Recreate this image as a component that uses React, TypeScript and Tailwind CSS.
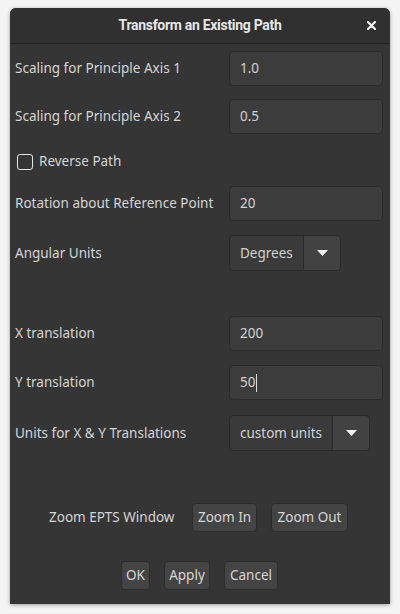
import React from "react";

const font = { fontFamily: '"Noto Sans", "Open Sans", sans-serif' };

function Entry({ value, caret }: { value: string; caret?: boolean }) {
  return (
    <div className="w-[154px] h-[35px] shrink-0 rounded-[4px] border border-[#2a2a2a] bg-[#3c3c3c] flex items-center pl-[10px] text-[13.5px] text-[#d2d2d2]">
      <span>{value}</span>
      {caret && <span className="inline-block w-px h-[18px] bg-[#e0e0e0] ml-px" />}
    </div>
  );
}

function Combo({ value, w, textW }: { value: string; w: number; textW: number }) {
  return (
    <div
      className="h-[36px] shrink-0 rounded-[4px] border border-[#2a2a2a] bg-[#3a3a3a] flex text-[13.5px] text-[#d2d2d2]"
      style={{ width: w }}
    >
      <div className="flex items-center pl-[10px] border-r border-[#2a2a2a]" style={{ width: textW }}>
        {value}
      </div>
      <div className="flex-1 flex items-center justify-center bg-[#424242] rounded-r-[4px]">
        <svg width="11" height="6" viewBox="0 0 11 6">
          <path d="M0 0 L11 0 L5.5 6 Z" fill="#f0f0f0" />
        </svg>
      </div>
    </div>
  );
}

function Row({ label, children, className = "" }: { label: string; children: React.ReactNode; className?: string }) {
  return (
    <div className={"flex items-center " + className}>
      <div className="w-[219px] shrink-0 pl-[5px] text-[13.5px] text-[#d4d4d4] whitespace-nowrap">{label}</div>
      {children}
    </div>
  );
}

function Btn({ children, w }: { children: React.ReactNode; w: number }) {
  return (
    <div
      className="h-[29px] shrink-0 rounded-[4px] border border-[#2c2c2c] bg-[#444444] flex items-center justify-center text-[13.5px] text-[#d6d6d6]"
      style={{ width: w }}
    >
      {children}
    </div>
  );
}

export default function App() {
  return (
    <div className="w-[400px] h-[614px] bg-[#f4f4f4] pt-[8px] pl-[10px]" style={font}>
      <div className="w-[380px] h-[596px] bg-[#353535] rounded-t-[6px] shadow-[0_1px_4px_rgba(0,0,0,0.35)] flex flex-col">
        <div className="h-[36px] bg-[#303030] rounded-t-[6px] border-b border-[#232323] flex items-center justify-center relative">
          <span
            className="text-[14px] font-bold text-[#e6e6e6] tracking-[-0.3px]"
            style={{ fontFamily: 'Roboto, "Noto Sans", sans-serif' }}
          >
            Transform an Existing Path
          </span>
          <svg className="absolute right-[14px] top-[13px]" width="9" height="9" viewBox="0 0 9 9">
            <path d="M1 1 L8 8 M8 1 L1 8" stroke="#f2f2f2" strokeWidth="2.2" strokeLinecap="round" />
          </svg>
        </div>
        <div className="flex flex-col pt-[7px]">
          <Row label="Scaling for Principle Axis 1">
            <Entry value="1.0" />
          </Row>
          <Row label="Scaling for Principle Axis 2" className="mt-[13px]">
            <Entry value="0.5" />
          </Row>
          <div className="mt-[19px] h-[17px] flex items-center pl-[7px]">
            <div className="w-[16px] h-[16px] rounded-[3px] border-[1.5px] border-[#e6e6e6]" />
            <span className="ml-[6px] text-[13.5px] text-[#d4d4d4]">Reverse Path</span>
          </div>
          <Row label="Rotation about Reference Point" className="mt-[16px]">
            <Entry value="20" />
          </Row>
          <Row label="Angular Units" className="mt-[14px]">
            <Combo value="Degrees" w={112} textW={74} />
          </Row>
          <Row label="X translation" className="mt-[45px]">
            <Entry value="200" />
          </Row>
          <Row label="Y translation" className="mt-[14px]">
            <Entry value="50" caret />
          </Row>
          <Row label="Units for X & Y Translations" className="mt-[15px]">
            <Combo value="custom units" w={141} textW={103} />
          </Row>
          <div className="mt-[52px] flex items-center pl-[39px]">
            <span className="text-[13.5px] text-[#d4d4d4] w-[143px]">Zoom EPTS Window</span>
            <Btn w={65}>Zoom In</Btn>
            <div className="w-[14px]" />
            <Btn w={77}>Zoom Out</Btn>
          </div>
          <div className="mt-[29px] flex items-center pl-[111px]">
            <Btn w={29}>OK</Btn>
            <div className="w-[14px]" />
            <Btn w={46}>Apply</Btn>
            <div className="w-[14px]" />
            <Btn w={54}>Cancel</Btn>
          </div>
        </div>
      </div>
    </div>
  );
}
